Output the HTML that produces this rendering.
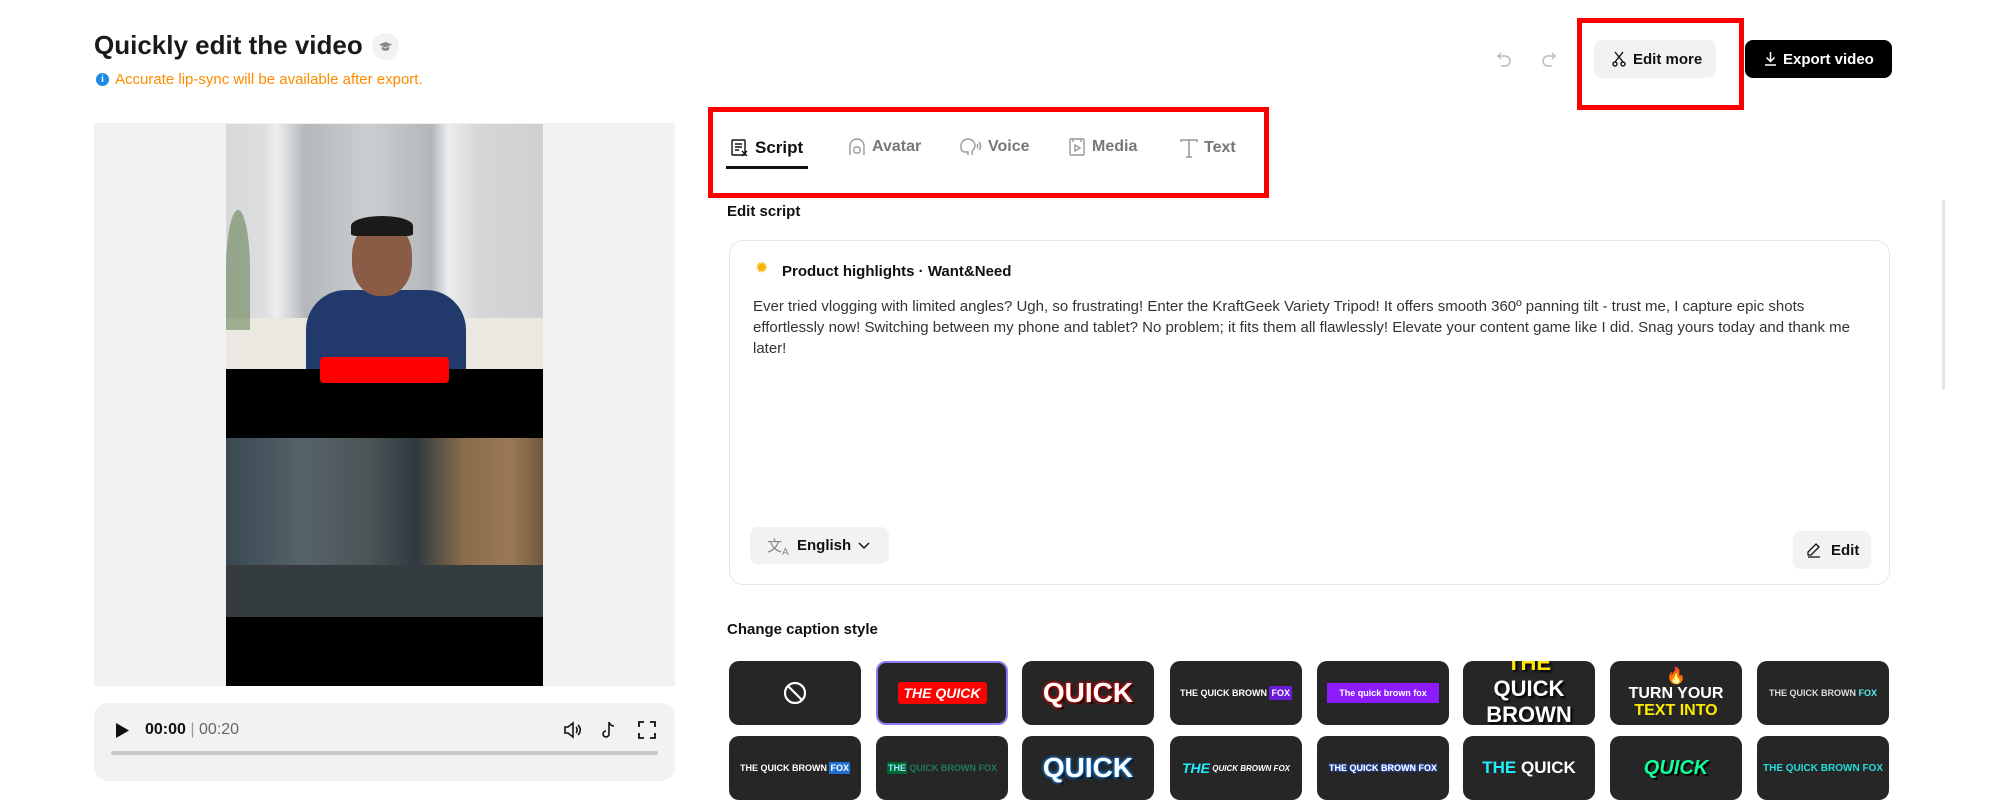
<!DOCTYPE html>
<html><head><meta charset="utf-8"><style>
*{box-sizing:border-box;margin:0;padding:0}
body{width:2000px;height:799px;background:#fff;font-family:"Liberation Sans",sans-serif;color:#111;position:relative;overflow:hidden}
.a{position:absolute}
.tile{position:absolute;width:132px;height:64px;background:#262626;border-radius:10px;overflow:hidden;display:flex;align-items:center;justify-content:center;font-weight:bold;color:#fff;white-space:nowrap}
.tab{position:absolute;top:138px;font-size:16px;color:#777;font-weight:bold;display:flex;align-items:center;gap:6px}
</style></head><body>
<div class="a" style="left:94px;top:30px;font-size:26px;font-weight:bold;color:#1a1a1a">Quickly edit the video</div>
<div class="a" style="left:372px;top:33px;width:27px;height:27px;border-radius:50%;background:#f2f2f2"></div>
<svg class="a" style="left:378px;top:39px" width="15" height="15" viewBox="0 0 16 16"><path d="M1 6l7-3 7 3-7 3z" fill="#888"/><path d="M4 8v3c2 2 6 2 8 0V8L8 10z" fill="#888"/></svg>
<div class="a" style="left:96px;top:73px;width:13px;height:13px;border-radius:50%;background:#1e88e5;color:#fff;font-size:10px;font-weight:bold;text-align:center;line-height:13px">i</div>
<div class="a" style="left:115px;top:71px;font-size:15px;color:#ff8a00">Accurate lip-sync will be available after export.</div>

<!-- video area -->
<div class="a" style="left:94px;top:123px;width:581px;height:563px;background:#f2f2f2"></div>
<div class="a" style="left:226px;top:124px;width:317px;height:562px;background:#000"></div>
<div class="a" style="left:226px;top:124px;width:317px;height:245px;background:linear-gradient(90deg,#d6d8da 0%,#dcdedf 12%,#eeeeee 16%,#b4b8bb 25%,#cbced0 45%,#b3b7ba 65%,#eceded 70%,#d5d6d8 80%,#cfd0d2 100%)"></div>
<div class="a" style="left:226px;top:318px;width:317px;height:51px;background:#ebe8e2"></div>
<div class="a" style="left:226px;top:210px;width:24px;height:120px;background:#5f7a4a;opacity:.55;border-radius:50% 50% 0 0"></div>
<div class="a" style="left:306px;top:290px;width:160px;height:79px;background:#223a6b;border-radius:40px 40px 0 0"></div>
<div class="a" style="left:352px;top:222px;width:60px;height:74px;background:#8a5b45;border-radius:45%"></div>
<div class="a" style="left:351px;top:216px;width:62px;height:20px;background:#1b1a1a;border-radius:50% 50% 10% 10%"></div>
<div class="a" style="left:320px;top:357px;width:129px;height:26px;background:#f00;border-radius:4px"></div>
<div class="a" style="left:226px;top:438px;width:317px;height:179px;background:linear-gradient(90deg,#3a4852 0%,#56636a 25%,#4b5456 45%,#2f3a40 60%,#8a6c4b 75%,#9a7a55 90%,#6f5840 100%)"></div>
<div class="a" style="left:226px;top:565px;width:317px;height:52px;background:#343c40"></div>

<!-- controls -->
<div class="a" style="left:94px;top:703px;width:581px;height:78px;background:#f2f2f2;border-radius:14px"></div>
<svg class="a" style="left:115px;top:722px" width="15" height="17"><path d="M1 1l13 7.5L1 16z" fill="#111"/></svg>
<div class="a" style="left:145px;top:721px;font-size:16px;font-weight:bold">00:00 <span style="color:#999;font-weight:normal">|</span> <span style="color:#666;font-weight:normal">00:20</span></div>
<div class="a" style="left:111px;top:751px;width:547px;height:4px;background:#c8c8c8;border-radius:2px"></div>
<svg class="a" style="left:562px;top:720px" width="20" height="20" viewBox="0 0 20 20" fill="none" stroke="#111" stroke-width="1.6"><path d="M3 7h3l5-4v14l-5-4H3z"/><path d="M14 7c1.5 1.5 1.5 4.5 0 6M16 5c3 3 3 7 0 10"/></svg>
<svg class="a" style="left:600px;top:720px" width="18" height="20" viewBox="0 0 18 20" fill="none" stroke="#111" stroke-width="1.6"><path d="M9 2v12a3 3 0 1 1-3-3M9 2c1 3 3 4 5 4"/></svg>
<svg class="a" style="left:638px;top:721px" width="18" height="18" viewBox="0 0 18 18" fill="none" stroke="#111" stroke-width="1.8"><path d="M1 6V1h5M12 1h5v5M17 12v5h-5M6 17H1v-5"/></svg>

<!-- top right -->
<svg class="a" style="left:1497px;top:52px" width="14" height="16" viewBox="0 0 14 16" fill="none" stroke="#bbb" stroke-width="1.5"><path d="M4 1L1 4l3 3M1 4h7a5 5 0 0 1 0 10H4"/></svg>
<svg class="a" style="left:1542px;top:52px" width="14" height="16" viewBox="0 0 14 16" fill="none" stroke="#bbb" stroke-width="1.5"><path d="M10 1l3 3-3 3M13 4H6a5 5 0 0 0 0 10h4"/></svg>
<div class="a" style="left:1594px;top:40px;width:122px;height:38px;background:#f2f2f2;border-radius:8px"></div>
<svg class="a" style="left:1612px;top:51px" width="14" height="16" viewBox="0 0 14 16" fill="none" stroke="#111" stroke-width="1.4"><path d="M3 1l8 10M11 1L3 11"/><circle cx="3" cy="13" r="2"/><circle cx="11" cy="13" r="2"/></svg>
<div class="a" style="left:1633px;top:51px;font-size:15px;font-weight:bold">Edit more</div>
<div class="a" style="left:1577px;top:18px;width:167px;height:92px;border:5px solid #f00"></div>
<div class="a" style="left:1745px;top:40px;width:147px;height:38px;background:#000;border-radius:8px"></div>
<svg class="a" style="left:1764px;top:51px" width="13" height="15" viewBox="0 0 13 15" fill="none" stroke="#fff" stroke-width="1.5"><path d="M6.5 1v9M2.5 6.5l4 4 4-4M1 14h11"/></svg>
<div class="a" style="left:1783px;top:51px;font-size:15px;font-weight:bold;color:#fff">Export video</div>

<!-- tabs -->
<div class="a" style="left:708px;top:107px;width:561px;height:91px;border:5px solid #f00"></div>
<div class="tab" style="left:731px;color:#111"><svg width="18" height="18" viewBox="0 0 18 18" fill="none" stroke="#111" stroke-width="1.4"><rect x="1" y="1" width="13" height="15" rx="1"/><path d="M4 5h7M4 8h7M4 11h4M11 12l5 5M16 12l-5 5"/></svg><span style="font-size:17px">Script</span></div>
<div class="a" style="left:726px;top:166px;width:82px;height:3px;background:#111"></div>
<div class="tab" style="left:848px"><svg width="18" height="18" viewBox="0 0 18 18" fill="none" stroke="#999" stroke-width="1.4"><path d="M2 17V8a7 7 0 0 1 14 0v9"/><rect x="6" y="9" width="6" height="6" rx="2"/></svg>Avatar</div>
<div class="tab" style="left:960px"><svg width="22" height="18" viewBox="0 0 22 18" fill="none" stroke="#999" stroke-width="1.4"><path d="M8 17v-3H5a4 4 0 0 1-4-4V8a7 7 0 0 1 14 0c0 3-3 4-3 6v3"/><path d="M17 6c1 1 1 3 0 4M19 4c2 2 2 6 0 8"/></svg>Voice</div>
<div class="tab" style="left:1068px"><svg width="18" height="18" viewBox="0 0 18 18" fill="none" stroke="#999" stroke-width="1.4"><rect x="2" y="1" width="14" height="16" rx="1"/><path d="M5 1v3M13 1v3M7 7l5 3-5 3z"/></svg>Media</div>
<div class="tab" style="left:1180px"><svg width="18" height="20" viewBox="0 0 18 20" fill="none" stroke="#999" stroke-width="1.5"><path d="M1 4V2h16v2M9 2v17M6 19h6"/></svg>Text</div>

<div class="a" style="left:727px;top:203px;font-size:15px;font-weight:bold">Edit script</div>
<div class="a" style="left:729px;top:240px;width:1161px;height:345px;border:1px solid #e6e6e6;border-radius:14px"></div>
<div class="a" style="left:755px;top:262px;width:14px;height:14px;color:#f5b400;font-size:16px;line-height:14px">✹</div>
<div class="a" style="left:782px;top:263px;font-size:15px;font-weight:bold">Product highlights · Want&amp;Need</div>
<div class="a" style="left:753px;top:296px;width:1110px;font-size:15px;line-height:21px;color:#333">Ever tried vlogging with limited angles? Ugh, so frustrating! Enter the KraftGeek Variety Tripod! It offers smooth 360º panning tilt - trust me, I capture epic shots effortlessly now! Switching between my phone and tablet? No problem; it fits them all flawlessly! Elevate your content game like I did. Snag yours today and thank me later!</div>
<div class="a" style="left:750px;top:527px;width:139px;height:37px;background:#f2f2f2;border-radius:8px"></div>
<div class="a" style="left:767px;top:535px;font-size:15px;color:#888">文<sub style="font-size:10px">A</sub></div>
<div class="a" style="left:797px;top:537px;font-size:15px;font-weight:bold">English</div>
<svg class="a" style="left:858px;top:542px" width="12" height="8"><path d="M1 1l5 5 5-5" fill="none" stroke="#111" stroke-width="1.5"/></svg>
<div class="a" style="left:1793px;top:531px;width:78px;height:38px;background:#f2f2f2;border-radius:8px"></div>
<svg class="a" style="left:1807px;top:543px" width="14" height="15" viewBox="0 0 14 15" fill="none" stroke="#111" stroke-width="1.3"><path d="M9 1l3 3-8 8H1V9zM1 14h12"/></svg>
<div class="a" style="left:1831px;top:542px;font-size:15px;font-weight:bold">Edit</div>

<div class="a" style="left:1942px;top:200px;width:3px;height:190px;background:#e4e4e4;border-radius:2px"></div>

<div class="a" style="left:727px;top:621px;font-size:15px;font-weight:bold">Change caption style</div>
<!-- row1 -->
<div class="tile" style="left:729px;top:661px"><svg width="24" height="24" viewBox="0 0 24 24" fill="none" stroke="#fff" stroke-width="2.2"><circle cx="12" cy="12" r="10"/><path d="M5 5l14 14"/></svg></div>
<div class="tile" style="left:876px;top:661px;border:2px solid #8b7cf6"><span style="background:#f00;padding:3px 6px;border-radius:3px;font-style:italic;font-size:14px">THE QUICK</span></div>
<div class="tile" style="left:1022px;top:661px;font-size:28px;text-shadow:0 0 3px #e00,0 0 3px #e00,2px 2px 0 #000">QUICK</div>
<div class="tile" style="left:1170px;top:661px;font-size:9px">THE QUICK BROWN&nbsp;<span style="background:#6a1bd8;padding:2px">FOX</span></div>
<div class="tile" style="left:1317px;top:661px"><span style="background:#8c1cff;font-size:9px;padding:5px 12px">The quick brown fox</span></div>
<div class="tile" style="left:1463px;top:661px;flex-direction:column;font-size:22px;line-height:26px;text-shadow:2px 2px 2px #000"><span style="color:#ffe600;margin-top:-8px">THE</span><span>QUICK</span><span>BROWN</span></div>
<div class="tile" style="left:1610px;top:661px;flex-direction:column;font-size:16px;line-height:17px"><span style="font-size:16px">🔥</span><span>TURN YOUR</span><span style="color:#ffea00">TEXT INTO</span></div>
<div class="tile" style="left:1757px;top:661px;font-size:9px;color:#ddd">THE QUICK BROWN&nbsp;<span style="color:#5ee">FOX</span></div>
<!-- row2 -->
<div class="tile" style="left:729px;top:736px;font-size:9px">THE QUICK BROWN&nbsp;<span style="background:#1e6fd0;padding:1px">FOX</span></div>
<div class="tile" style="left:876px;top:736px;font-size:9px;color:#1f7a5e"><span style="background:#063;padding:1px;color:#9ef">THE</span>&nbsp;QUICK BROWN FOX</div>
<div class="tile" style="left:1022px;top:736px;font-size:28px;text-shadow:0 0 3px #1a8cff,0 0 3px #1a8cff,2px 2px 0 #000">QUICK</div>
<div class="tile" style="left:1170px;top:736px;font-size:8px;font-style:italic"><span style="color:#2ef;font-size:14px">THE</span>&nbsp;QUICK BROWN FOX</div>
<div class="tile" style="left:1317px;top:736px;font-size:9px;text-shadow:0 0 2px #36f,0 0 2px #36f">THE QUICK BROWN FOX</div>
<div class="tile" style="left:1463px;top:736px;font-size:17px"><span style="color:#2ef">THE</span>&nbsp;QUICK</div>
<div class="tile" style="left:1610px;top:736px;font-size:20px;font-style:italic;color:#1f9;text-shadow:2px 2px 0 #000">QUICK</div>
<div class="tile" style="left:1757px;top:736px;font-size:10px;color:#2dd">THE QUICK BROWN FOX</div>
</body></html>
